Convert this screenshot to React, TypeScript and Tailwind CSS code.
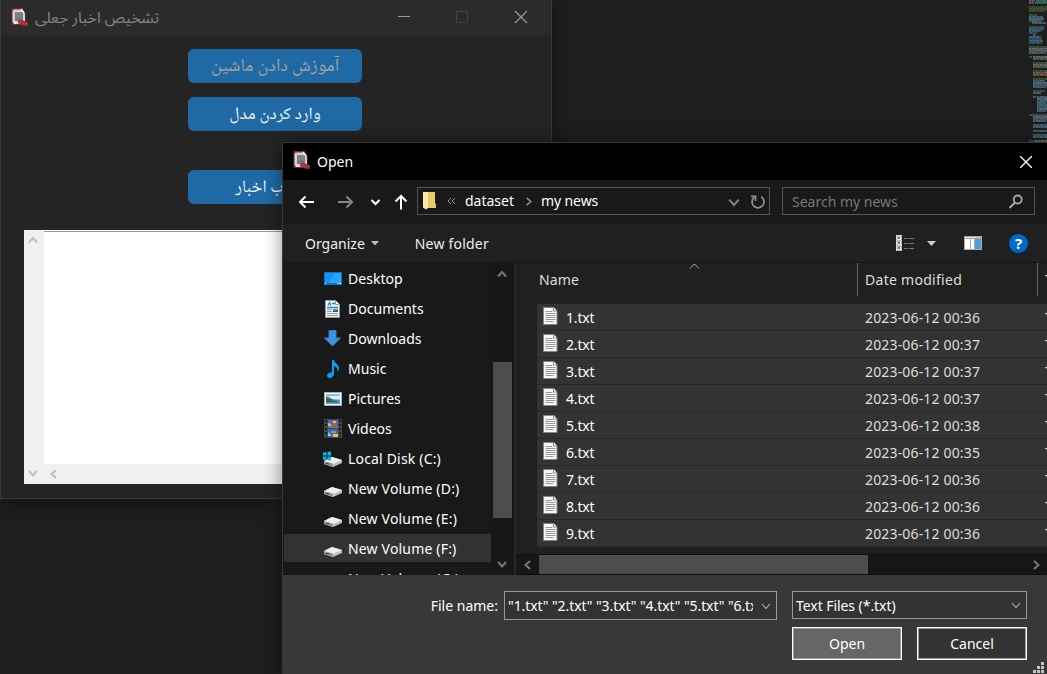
import React from "react";

const FILES = [
  ["1.txt", "2023-06-12 00:36"],
  ["2.txt", "2023-06-12 00:37"],
  ["3.txt", "2023-06-12 00:37"],
  ["4.txt", "2023-06-12 00:37"],
  ["5.txt", "2023-06-12 00:38"],
  ["6.txt", "2023-06-12 00:35"],
  ["7.txt", "2023-06-12 00:36"],
  ["8.txt", "2023-06-12 00:36"],
  ["9.txt", "2023-06-12 00:36"],
];

type Dir = "up" | "down" | "left" | "right";

function Chevron({ dir, w = 10, color, stroke = 2 }: { dir: Dir; w?: number; color: string; stroke?: number }) {
  const d = {
    up: "M1 7.5L5 3L9 7.5",
    down: "M1 3L5 7.5L9 3",
    left: "M7 1L2.5 5L7 9",
    right: "M3 1L7.5 5L3 9",
  }[dir];
  return (
    <svg width={w} height={w} viewBox="0 0 10 10" fill="none" stroke={color} strokeWidth={stroke} className="shrink-0">
      <path d={d} />
    </svg>
  );
}

function AppIcon() {
  return (
    <svg width="18" height="20" viewBox="0 0 18 20" className="shrink-0">
      <path d="M.5 1h11l3 4v13H.5z" fill="#7b2631" />
      <path d="M2.500 2.500h8l3.500 4V17H3L1.500 15V4z" fill="#d5d3d4" />
      <rect x="4" y="5" width="8" height="9" fill="#77787a" />
      <path d="M5 6h6M5 9h6" stroke="#929294" />
      <path d="M3 16h2M10 2l3 4" stroke="#f5f5f5" strokeWidth="1.5" />
      <path d="M7 14l3-1.500 7 3-.5 3.500-5-.5-4.500-2.500z" fill="#a32c3e" />
      <path d="M9 15l2 .5M12 15.500l1 1.500M15 16l1 1" stroke="#d24e5c" />
    </svg>
  );
}

function DesktopIcon() {
  return (
    <svg width="18" height="13" viewBox="0 0 18 13">
      <rect width="18" height="13" fill="#0078d0" />
      <path d="M1 1h16v10H1z" fill="#1595f4" />
      <path d="M11 1h6v10H5z" fill="#27a6fb" />
      <path d="M1 11.5h16" stroke="#0670bd" />
      <path d="M1 11.5h1M13 11.5h1M15 11.5h2" stroke="#fff" />
    </svg>
  );
}

function DocumentIcon() {
  return (
    <svg width="15" height="18" viewBox="0 0 15 18">
      <path d="M.5.5h10l4 4v13H.5z" fill="#f7f7f7" stroke="#999" />
      <path d="M10.500.5v4h4" fill="#fff" stroke="#999" />
      <path d="M3 5.500l1.500-3L6 5.500M7 3.500h3M2 7.500h11" fill="none" stroke="#1687cf" strokeWidth="1.3" />
      <path d="M2 9.500h5M2 11.500h5M2 13.500h11M2 15.500h11" stroke="#9a9a9a" />
      <rect x="8" y="9" width="5" height="3" fill="#3d8dc2" />
      <path d="M8 11.500h5" stroke="#315442" />
    </svg>
  );
}

function DownloadIcon() {
  return (
    <svg width="17" height="17" viewBox="0 0 17 17">
      <path d="M5 .5h7V8h4.500L8.500 16 .5 8H5z" fill="#3d94e2" stroke="#2f82ce" />
    </svg>
  );
}

function MusicIcon() {
  return (
    <svg width="12" height="18" viewBox="0 0 12 18">
      <path d="M5 0h2c0 3 5 4 5 8 0 2-.6 3-1.500 4C11 8 9 6.500 7 6.300V14c0 2-2 4-4.500 4C.8 18 0 17 0 15.500 0 13.500 2.800 12 5 12.600z" fill="#0b9cfb" />
    </svg>
  );
}

function PictureIcon() {
  return (
    <svg width="18" height="14" viewBox="0 0 18 14">
      <rect x=".5" y=".5" width="17" height="13" fill="#fff" stroke="#aaa" />
      <rect x="2" y="2" width="14" height="10" fill="#8abfea" />
      <path d="M5 4h11v3H8z" fill="#dceefa" />
      <path d="M2 5l3 1 5 2 6 1H2z" fill="#3b654b" />
      <path d="M2 9l14-1v4H2z" fill="#5797b4" />
      <path d="M2 9.500h11" stroke="#2b5547" />
    </svg>
  );
}

function VideoIcon() {
  return (
    <svg width="18" height="19" viewBox="0 0 18 19">
      <rect width="18" height="19" fill="#464646" />
      <rect x="4" y="1" width="10" height="8" fill="#4668d8" />
      <rect x="4" y="10" width="10" height="8" fill="#3664cf" />
      <path d="M8 3h5v3H8z" fill="#d54c27" />
      <path d="M9 2h3v2H9zM9 15h5v3H9z" fill="#edc433" />
      <path d="M4 7h10v2H4z" fill="#5b8b45" />
      <path d="M4 4l3 1v2H4z" fill="#ec9fb6" />
      <path d="M7 12h5v2H7z" fill="#91a541" />
      <path d="M4 13l4 4H4z" fill="#8bc6f0" />
      <path d="M2 1v17M16 1v17" stroke="#1b1b1b" strokeWidth="2" strokeDasharray="2 2" />
    </svg>
  );
}

function DriveIcon({ windows = false }: { windows?: boolean }) {
  return (
    <svg width="19" height="16" viewBox="0 0 19 16">
      <path d="M1 10l8-4 10 3v3l-9 4-9-3z" fill="#bfc1c3" />
      <path d="M1 10l8-4 10 3-9 4z" fill="#efeff0" />
      <path d="M1 10l9 2.500V16l-9-3z" fill="#a3a5a6" />
      <path d="M2.500 11.500l6 1.700v1.300l-6-1.700z" fill="#3c423e" />
      <path d="M6 13.500h2" stroke="#57b96e" />
      {windows && <path d="M0 1.500L3.500 1v3.500H0zM4.500 1L8 .5v4H4.500zM0 5.500h3.500V9L0 8.500zM4.500 5.500H8v4L4.500 9z" fill="#00b9f2" />}
    </svg>
  );
}

function TextFileIcon() {
  return (
    <svg width="15" height="18" viewBox="0 0 15 18" className="shrink-0">
      <path d="M.5.5h10.500l3 3.500v13.500H.5z" fill="#f6f6f6" stroke="#858585" />
      <path d="M10.500.5V4h3.500" fill="#fff" stroke="#858585" />
      <path d="M2.500 4.500h7M2.500 6.500h10M2.500 8.500h10M2.500 10.500h10M2.500 12.500h10M2.500 14.500h8" stroke="#999" />
    </svg>
  );
}

const PLACES: { label: string; icon: React.ReactNode; active?: boolean }[] = [
  { label: "Desktop", icon: <DesktopIcon /> },
  { label: "Documents", icon: <DocumentIcon /> },
  { label: "Downloads", icon: <DownloadIcon /> },
  { label: "Music", icon: <MusicIcon /> },
  { label: "Pictures", icon: <PictureIcon /> },
  { label: "Videos", icon: <VideoIcon /> },
  { label: "Local Disk (C:)", icon: <DriveIcon windows /> },
  { label: "New Volume (D:)", icon: <DriveIcon /> },
  { label: "New Volume (E:)", icon: <DriveIcon /> },
  { label: "New Volume (F:)", icon: <DriveIcon />, active: true },
  { label: "New Volume (G:)", icon: null },
];

// Each entry: y, left indent, line length, colour.
const CODE: [number, number, number, string][] = [
  [0, 0, 6, "#8a5a85"], [0, 7, 11, "#3f8a78"], [2, 0, 5, "#8a5a85"], [2, 6, 12, "#3f8a78"],
  [6, 0, 18, "#44613a"], [8, 0, 18, "#4c693f"], [10, 0, 16, "#44613a"],
  [14, 0, 8, "#4c693f"], [16, 0, 14, "#527a94"], [18, 0, 15, "#668ba0"], [20, 0, 13, "#527a94"], [22, 3, 14, "#587f96"],
  [26, 0, 16, "#4c693f"], [28, 0, 15, "#527a94"], [30, 0, 12, "#4c729a"], [32, 0, 8, "#3c6691"], [34, 4, 3, "#4c729a"], [36, 0, 12, "#527a94"], [38, 0, 13, "#3c6691"], [40, 0, 14, "#587f96"], [42, 0, 13, "#3c6691"],
  [46, 0, 18, "#4c693f"], [48, 0, 18, "#668ba0"], [50, 0, 18, "#8b7159"], [52, 0, 17, "#527a94"],
  [56, 0, 3, "#3c6691"], [56, 4, 14, "#8c8664"], [58, 4, 14, "#527a94"],
  [62, 4, 14, "#4c693f"], [64, 4, 14, "#8c8664"], [66, 4, 14, "#527a94"],
  [70, 4, 14, "#4c693f"], [72, 4, 14, "#9d6658"], [74, 4, 14, "#8b7159"],
  [78, 4, 14, "#4c693f"], [80, 4, 12, "#527a94"], [82, 4, 14, "#668ba0"], [84, 4, 14, "#527a94"], [86, 4, 13, "#587f96"],
  [90, 4, 12, "#4c693f"], [92, 4, 8, "#527a94"], [96, 4, 3, "#8a5a85"], [96, 8, 10, "#527a94"],
  [98, 8, 10, "#668ba0"], [100, 8, 10, "#527a94"], [102, 8, 9, "#587f96"], [104, 8, 10, "#3f8a78"], [106, 8, 10, "#527a94"], [108, 8, 10, "#668ba0"], [110, 8, 9, "#527a94"],
  [116, 4, 14, "#668ba0"], [118, 4, 14, "#527a94"], [120, 4, 13, "#587f96"], [124, 4, 14, "#527a94"], [126, 4, 14, "#587f96"],
  [130, 4, 14, "#3f8a78"], [134, 4, 14, "#527a94"], [136, 4, 14, "#587f96"], [140, 0, 4, "#3c6691"], [140, 5, 13, "#8c8664"],
];

function Minimap() {
  return (
    <svg width="18" height="142" className="ml-auto block" shapeRendering="crispEdges">
      <rect y="114" width="18" height="2" fill="#464646" />
      {CODE.map(([y, x, w, c], i) => (
        <g key={i} stroke={c}>
          <path d={`M${x} ${y + 1}h${w}`} strokeWidth="2" opacity=".4" />
          <path d={`M${x} ${y + 0.5}h${w}`} strokeDasharray={i % 2 ? "3 1 2 1" : "2 1 4 1"} opacity=".6" />
          <path d={`M${x} ${y + 1.5}h${w}`} strokeDasharray={i % 2 ? "1 1 2 1" : "2 1"} opacity=".45" />
        </g>
      ))}
    </svg>
  );
}

function MainWindow() {
  return (
    <section className="absolute left-0 top-0 flex h-[499px] w-[552px] flex-col border-x border-b border-[#3a3a3a] bg-[#242424] shadow-[0_4px_16px_rgba(0,0,0,0.35)]">
      <header className="flex h-9 shrink-0 items-center bg-[#2b2b2b] pl-[10px]">
        <div className="mb-[3px]"><AppIcon /></div>
        <span dir="rtl" className="ml-[6px] mt-[2px] whitespace-nowrap font-['Noto_Sans_Arabic',sans-serif] text-[15.500px] leading-none text-[#858585]">تشخیص اخبار جعلی</span>
        <div className="ml-auto flex items-center pr-[23px]">
          <svg width="130" height="14" viewBox="0 0 130 14" fill="none" className="-mt-[2px]">
            <path d="M0 6.500h12" stroke="#999" />
            <path d="M58.500 1.500h11v11h-11z" stroke="#414141" />
            <path d="M117 1l12 12M129 1l-12 12" stroke="#999" strokeWidth="1.200" />
          </svg>
        </div>
      </header>
      <div className="flex flex-col items-start pl-[187px] pt-[13px] font-['Noto_Naskh_Arabic',serif] text-[#f2f5f8]">
        <button className="flex h-[34px] w-[174px] items-center justify-center rounded-[6px] bg-[#1f6aa5] pt-[3px] text-[18.400px] leading-none text-[#a3a3a3]"><span dir="rtl">آموزش دادن ماشین</span></button>
        <button className="mt-[14px] flex h-[34px] w-[174px] items-center justify-center rounded-[6px] bg-[#1f6aa5] pt-[3px] text-[17.300px] leading-none"><span dir="rtl">وارد کردن مدل</span></button>
        <button className="mt-[39px] flex h-[34px] w-[174px] items-center justify-center rounded-[6px] bg-[#1f6aa5] pt-[3px] text-[17.300px] leading-none"><span dir="rtl">انتخاب اخبار</span></button>
      </div>
      <div className="ml-[23px] mt-[26px] flex h-[254px] w-[502px] bg-white">
        <div className="flex w-5 flex-col items-center justify-between bg-[#f0f0f0] pb-[6px] pr-[2px] pt-[5px]">
          <Chevron dir="up" color="#bfbfbf" />
          <Chevron dir="down" color="#bfbfbf" />
        </div>
        <div className="flex flex-1 flex-col pt-px">
          <div className="flex-1 border-t border-[#9b9b9b]" />
          <div className="flex h-5 items-center bg-[#f0f0f0] pl-[5px]"><Chevron dir="left" color="#bfbfbf" /></div>
        </div>
      </div>
    </section>
  );
}

function NavBar() {
  return (
    <div className="flex h-[44px] shrink-0 bg-[#191919] pt-[7px]">
      <svg width="134" height="28" viewBox="0 0 134 28" fill="none" strokeWidth="2" className="shrink-0">
        <path d="M31 15H17M22.500 9.500L17 15l5.500 5.500" stroke="#fff" />
        <path d="M55 15h14M63.500 9.500L69 15l-5.500 5.500" stroke="#858585" />
        <path d="M88.500 13l4 4 4-4" stroke="#fff" />
        <path d="M118 22.500V9M112.500 14.500L118 9l5.500 5.500" stroke="#fff" />
      </svg>
      <div className="flex h-[28px] w-[353px] items-center border border-[#535353] pl-[5px] pr-1 text-white">
        <svg width="13" height="18" viewBox="0 0 13 18" className="-mt-[1px]">
          <path d="M0 0h12v11l1 1v4H3z" fill="#efc869" />
          <path d="M0 0h5v16l-2 1.500-3-2z" fill="#ffe9a3" />
        </svg>
        <svg width="9" height="8" viewBox="0 0 9 8" fill="none" stroke="#999" className="ml-[11px]"><path d="M4 1L1 4l3 3M8 1L5 4l3 3" /></svg>
        <span className="ml-[9px] w-[50px]">dataset</span>
        <span className="ml-[9px] flex"><Chevron dir="right" w={9} color="#8b8b8b" stroke={1.8} /></span>
        <span className="ml-[8px] tracking-[-0.100px]">my news</span>
        <div className="ml-auto flex items-center pt-[2px]">
          <Chevron dir="down" w={12} color="#858585" stroke={1.6} />
          <svg width="16" height="16" viewBox="0 0 16 16" fill="none" stroke="#929292" strokeWidth="1.700" className="-mr-px ml-[10px]">
            <path d="M11.300 3.300A6 6 0 1 1 4 3.800M5.500 7.500V2.800H1" transform="translate(0 -.5)" />
          </svg>
        </div>
      </div>
      <div className="ml-3 flex h-[28px] w-[253px] items-center justify-between border border-[#535353] pl-[9px] pr-[10px] text-[#777]">
        <span className="mt-[2px]">Search my news</span>
        <svg width="16" height="16" viewBox="0 0 16 16" fill="none" stroke="#aaa" className="mt-px"><circle cx="9.700" cy="5.500" r="4" strokeWidth="1.800" /><path d="M7 8.500L1.500 14" strokeWidth="2" /></svg>
      </div>
    </div>
  );
}

function ToolBar() {
  return (
    <div className="flex h-[39px] shrink-0 items-center border-b border-[#171717] bg-[#202020] pl-[22px] text-[#eeeeee]">
      <span className="mt-px">Organize</span>
      <svg width="8" height="5" className="ml-[6px]"><path d="M0 0h8L4 4.500z" fill="#c0c0c0" /></svg>
      <span className="ml-[36px] mt-px tracking-[0.200px]">New folder</span>
      <div className="ml-auto flex items-center pr-[20px]">
        <svg width="18" height="16" viewBox="0 0 18 16" shapeRendering="crispEdges">
          <path d="M0 0h6v16H0z" fill="#ddd" /><path d="M1 1h4v4H1zM1 6h4v4H1zM1 11h4v4H1z" fill="#fff" stroke="#888" strokeWidth=".5" />
          <path d="M2 2h2v2H2z" fill="#397ec0" /><path d="M2 7h2v2H2z" fill="#597e41" /><path d="M2 12h2v2H2z" fill="#c54635" />
          <path d="M8 3.500h4M13 3.500h5M8 8.500h4M13 8.500h5M8 13.500h4M13 13.500h5" stroke="#777" />
        </svg>
        <svg width="9" height="5" className="ml-[13px]"><path d="M0 0h9L4.500 5z" fill="#ccc" /></svg>
        <svg width="18" height="14" viewBox="0 0 18 14" className="ml-[28px]"><rect width="18" height="14" fill="#aaa" /><path d="M1 3h5v10H1zM7 3h3v10H7z" fill="#fff" /><path d="M11 3h6v10h-6z" fill="#4a9ee6" /><path d="M1 1.500h11M13 1.500h1M15 1.500h1" stroke="#ddd" /></svg>
        <span className="-mr-px ml-[27px] flex h-[19px] w-[19px] items-center justify-center rounded-full bg-[#0067cc] text-[15px] font-bold leading-none text-white">?</span>
      </div>
    </div>
  );
}

function Sidebar() {
  return (
    <div className="flex w-[231px] shrink-0 bg-[#191919]">
      <nav className="w-[208px] shrink-0 overflow-hidden pl-px">
        {PLACES.map(({ label, icon, active }) => (
          <div key={label} className="flex h-[30px] items-center">
            <div className={"flex h-[28px] w-[207px] items-center pl-[39px] pt-px " + (active ? "bg-[#333333]" : "")}>
              <span className="flex w-[19px] shrink-0 justify-center">{icon}</span>
              <span className={"ml-[6px] whitespace-nowrap text-white " + (label.includes("(") ? "tracking-[0.180px]" : "tracking-[0.020px]")}>{label}</span>
            </div>
          </div>
        ))}
      </nav>
      <div className="flex w-[23px] flex-col items-center bg-[#171717] pb-[6px] pr-[2px] pt-[6px]">
        <Chevron dir="up" color="#777" />
        <div className="ml-px mt-[83px] h-[156px] w-[19px] shrink-0 bg-[#4d4d4d]" />
        <div className="mt-auto"><Chevron dir="down" color="#777" /></div>
      </div>
    </div>
  );
}

function FileList() {
  return (
    <div className="flex min-w-0 flex-1 flex-col overflow-hidden border-l-2 border-[#282828] bg-[#202020]">
      <div className="flex h-[41px] shrink-0 text-[#dedede]">
        <div className="flex h-[33px] w-[342px] shrink-0 items-center border-r border-[#636363] pl-[23px]">
          <span className="w-[150px] tracking-[0.150px]">Name</span>
          <svg width="11" height="6" fill="none" stroke="#aaa" className="mb-[28px]"><path d="M1 5.500L5.500 1 10 5.500" /></svg>
        </div>
        <div className="flex h-[33px] w-[180px] shrink-0 items-center border-r border-[#636363] pl-[7px] tracking-[0.280px]">Date modified</div>
        <div className="flex h-[33px] shrink-0 items-center pl-[7px]">Type</div>
      </div>
      <div className="flex h-[250px] shrink-0 flex-col pl-[21px]">
        {FILES.map(([name, date]) => (
          <div key={name} className="flex h-[27px] shrink-0 items-center border-b border-[#282828] bg-[#333333] pl-[6px]">
            <div className="-mt-[2px] flex"><TextFileIcon /></div>
            <span className="ml-[8px] mt-px w-[299px] shrink-0 pt-px tracking-[-0.150px] text-white">{name}</span>
            <span className="mt-px w-[180px] shrink-0 pt-px tracking-[0.160px] text-[#dedede]">{date}</span>
            <span className="mt-px shrink-0 whitespace-nowrap pt-px text-[#dedede]">Text Document</span>
          </div>
        ))}
      </div>
      <div className="flex h-[21px] shrink-0 items-center justify-between border-y border-[#101010] bg-[#171717] pl-[7px] pr-[6px]">
        <div className="flex items-center">
          <Chevron dir="left" color="#777" />
          <div className="ml-[6px] h-[19px] w-[329px] bg-[#4d4d4d]" />
        </div>
        <Chevron dir="right" color="#777" />
      </div>
    </div>
  );
}

function Footer() {
  return (
    <footer className="flex flex-1 flex-col bg-[#383838] pr-[20px] pt-[16px] text-white">
      <div className="flex justify-end">
        <span className="mr-[6px] mt-[5px]">File name:</span>
        <div className="mr-[15px] flex h-[29px] w-[273px] items-center border border-[#999] bg-[#333] pl-[3px] pr-[5px]">
          <span className="w-[245px] overflow-hidden whitespace-nowrap tracking-[-0.080px]">"1.txt" "2.txt" "3.txt" "4.txt" "5.txt" "6.txt"</span>
          <span className="ml-auto"><Chevron dir="down" color="#bbb" stroke={1.1} /></span>
        </div>
        <div className="flex h-[28px] w-[235px] items-center justify-between border border-[#999] bg-[#333] pl-[3px] pr-[5px]">
          <span className="mt-[2px] tracking-[-0.060px]">Text Files (*.txt)</span><Chevron dir="down" color="#bbb" stroke={1.1} />
        </div>
      </div>
      <div className="mt-[7px] flex justify-end gap-[15px]">
        <button className="h-[33px] w-[110px] border border-white bg-[#666] text-white shadow-[inset_0_0_0_1px_#999]">Open</button>
        <button className="h-[33px] w-[110px] border border-white bg-[#333] text-white shadow-[inset_0_0_0_1px_#999]">Cancel</button>
      </div>
      <svg width="11" height="11" viewBox="0 0 11 11" className="-mr-[17px] ml-auto mt-[2px]" fill="#c5c5c5">
        <path d="M8 0h3v3H8zM4 4h3v3H4zM8 4h3v3H8zM0 8h3v3H0zM4 8h3v3H4zM8 8h3v3H8z" />
      </svg>
    </footer>
  );
}

function OpenDialog() {
  return (
    <section className="absolute left-[282px] top-[142px] flex h-[532px] w-[765px] flex-col overflow-hidden border-l border-t border-[#383838] bg-black font-['Noto_Sans','Open_Sans',sans-serif] text-[14px] leading-[20px] shadow-[0_0_18px_rgba(0,0,0,0.45)]">
      <header className="flex h-[37px] shrink-0 items-center pl-[10px] text-white">
        <div className="mb-[3px]"><AppIcon /></div>
        <span className="ml-[6px]">Open</span>
        <svg width="12" height="12" viewBox="0 0 12 12" stroke="#fff" strokeWidth="1.300" className="ml-auto mr-[15px]"><path d="M0 0l12 12M12 0L0 12" /></svg>
      </header>
      <NavBar />
      <ToolBar />
      <div className="flex h-[312px] shrink-0">
        <Sidebar />
        <FileList />
      </div>
      <Footer />
    </section>
  );
}

export default function App() {
  return (
    <main className="relative h-[674px] w-[1047px] overflow-hidden bg-[#1e1e1e]">
      <Minimap />
      <MainWindow />
      <OpenDialog />
    </main>
  );
}
